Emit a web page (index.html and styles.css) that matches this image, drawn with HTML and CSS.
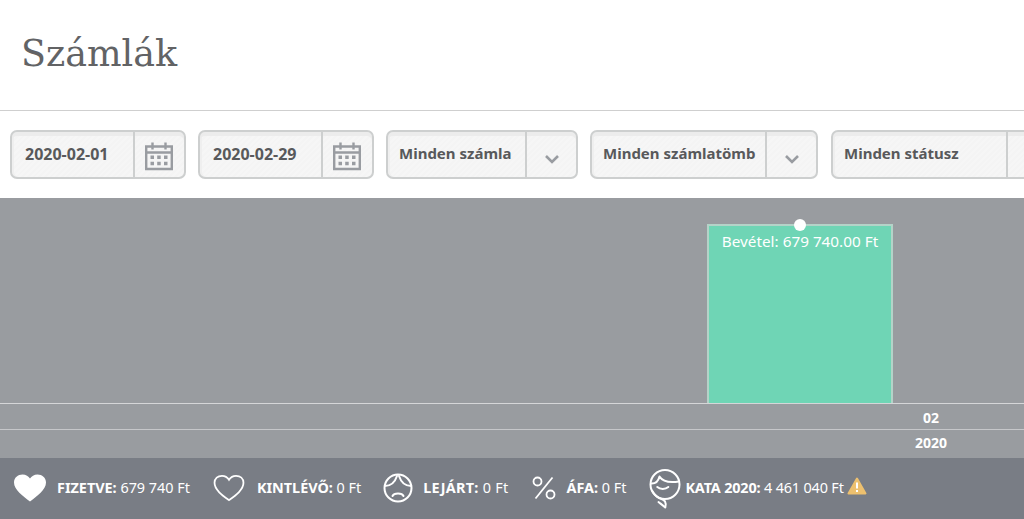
FILE: index.html
```html
<!DOCTYPE html>
<html lang="hu">
<head>
<meta charset="utf-8">
<title>Számlák</title>
<link rel="stylesheet" href="styles.css">
</head>
<body>
<header class="page-header"><h1 class="title">Számlák</h1></header>
<div class="toolbar">
  <div class="field date"><span class="value">2020-02-01</span><span class="addon"><svg class="cal" viewBox="0 0 30 30"><use href="#cal"/></svg></span></div>
  <div class="field date"><span class="value">2020-02-29</span><span class="addon"><svg class="cal" viewBox="0 0 30 30"><use href="#cal"/></svg></span></div>
  <div class="field sel-a"><span class="value">Minden számla</span><span class="addon"><svg class="chev" viewBox="0 0 16 10"><use href="#chev"/></svg></span></div>
  <div class="field sel-b"><span class="value">Minden számlatömb</span><span class="addon"><svg class="chev" viewBox="0 0 16 10"><use href="#chev"/></svg></span></div>
  <div class="field sel-c"><span class="value">Minden státusz</span><span class="addon"><svg class="chev" viewBox="0 0 16 10"><use href="#chev"/></svg></span></div>
</div>
<svg class="defs" aria-hidden="true">
  <symbol id="cal" viewBox="0 0 30 30">
    <path d="M2.200 5.500H27.800V28H2.200Z M2 11.500H28 M8.500 1.500V8.500 M21.500 1.500V8.500" fill="none" stroke="#999ca1" stroke-width="2.400"/>
    <path d="M6.500 14.500h3.500v3.500H6.500zM13.200 14.500h3.500v3.500h-3.500zM20 14.500h3.500v3.500H20zM6.500 20.800h3.500v3.500H6.500zM13.200 20.800h3.500v3.500h-3.500zM20 20.800h3.500v3.500H20z" fill="#999ca1"/>
  </symbol>
  <symbol id="chev" viewBox="0 0 16 10">
    <path d="M2 2L8 8L14 2" fill="none" stroke="#999ca1" stroke-width="2.600"/>
  </symbol>
</svg>
<section class="chart">
  <div class="plot">
    <div class="bar"><span class="dot"></span><span class="bar-label">Bevétel: 679 740.00 Ft</span></div>
  </div>
  <div class="axis axis-month"><span class="tick">02</span></div>
  <div class="axis axis-year"><span class="tick">2020</span></div>
</section>
<footer class="summary">
  <div class="stat s1">
    <svg class="ico" viewBox="0 0 34 30"><path d="M17 28.500C10 23 1 17 1 9.500C1 4.500 5 1.500 9.500 1.500C13 1.500 15.500 3.500 17 5.500C18.500 3.500 21 1.500 24.500 1.500C29 1.500 33 4.500 33 9.500C33 17 24 23 17 28.500Z" fill="#fff"/></svg>
    <span><b>FIZETVE:</b> 679 740 Ft</span>
  </div>
  <div class="stat s2">
    <svg class="ico heart-o" viewBox="0 0 34 30"><path d="M17 28C10 23 1.500 17 1.500 9.500C1.500 4.500 5 2 9.500 2C13 2 15.500 3.800 17 6.200C18.500 3.800 21 2 24.500 2C29 2 32.500 4.500 32.500 9.500C32.500 17 24 23 17 28Z" fill="none" stroke="#fff" stroke-width="1.900"/></svg>
    <span><b>KINTLÉVŐ:</b> 0 Ft</span>
  </div>
  <div class="stat s3">
    <svg class="ico round" viewBox="0 0 30 30"><g fill="none" stroke="#fff" stroke-width="2" stroke-linecap="round"><circle cx="15" cy="15" r="13.500"/><path d="M1.800 13C7 13 11.500 10.500 14 3M16 3C18.500 10.500 23 13 28.200 13"/><path d="M9.500 23C11 19.500 19 19.500 20.500 23"/></g></svg>
    <span><b>LEJÁRT:</b> 0 Ft</span>
  </div>
  <div class="stat s4">
    <svg class="ico pct" viewBox="0 0 24 24"><g fill="none" stroke="#fff" stroke-width="1.800"><circle cx="5.500" cy="5.500" r="4"/><circle cx="18.500" cy="18.500" r="4"/><path d="M20.500 1.500L3.500 22.500"/></g></svg>
    <span><b>ÁFA:</b> 0 Ft</span>
  </div>
  <div class="stat s5">
    <svg class="ico face" viewBox="0 0 32 40"><g fill="none" stroke="#fff" stroke-width="2" stroke-linecap="round" stroke-linejoin="round"><circle cx="16" cy="15.500" r="14.500"/><path d="M2 14.500C6.500 14.800 9.500 11.500 10.500 7.500C13 11.500 18 14.500 30 12.500"/><path d="M8.300 18C11 20.500 16.500 20.500 19.300 18"/><path d="M3 21.500C5.500 26 9 29 12.500 30C16 31 17.800 33 16.300 38.500C14 36.500 12 35 9.500 33"/></g></svg>
    <span class="kata"><b>KATA 2020:</b> 4 461 040 Ft</span>
    <svg class="warn" viewBox="0 0 20 18"><path d="M10 1.500L18.500 16.500H1.500Z" fill="#edc06f" stroke="#edc06f" stroke-width="2" stroke-linejoin="round"/><path d="M10 5.500V11.500M10 13V15" stroke="#fff" stroke-width="2"/></svg>
  </div>
</footer>
</body>
</html>
```
FILE: styles.css
```css
* { box-sizing: border-box; }
html, body { margin: 0; padding: 0; }
body {
  width: 1024px;
  height: 519px;
  overflow: hidden;
  background: #fff;
  font-family: "Noto Sans", "Open Sans", sans-serif;
  color: #58595b;
}
.defs { position: absolute; width: 0; height: 0; }
.page-header {
  height: 111px;
  border-bottom: 1px solid #cfcfcf;
  padding: 32px 0 0 21px;
}
.title {
  margin: 0;
  font-family: "DejaVu Serif", serif;
  font-weight: 400;
  font-size: 36.500px;
  line-height: 44px;
  letter-spacing: 0;
  color: #626365;
}
.toolbar {
  height: 87px;
  display: flex;
  gap: 12px;
  padding: 19px 0 0 10px;
  overflow: hidden;
}
.field {
  flex: none;
  height: 49px;
  display: flex;
  border: 2px solid #cdcfcf;
  border-radius: 7px;
  background: repeating-linear-gradient(135deg, #f6f6f6 0 2px, #f4f4f4 2px 4px);
  box-shadow: inset 0 4px 0 #ececec, inset 2px 0 0 #efefef;
}
.date { width: 176px; }
.sel-a { width: 192px; }
.sel-b { width: 228px; }
.sel-c { width: 228px; margin-left: 1px; }
.value {
  flex: 1;
  font-size: 15px;
  font-weight: 700;
  line-height: 42px;
  padding-left: 11px;
  white-space: nowrap;
  color: #58595b;
}
.date .value {
  font-size: 16px;
  line-height: 45px;
  padding-left: 13px;
}
.addon {
  flex: none;
  width: 51px;
  display: flex;
  align-items: center;
  justify-content: center;
  border-left: 2px solid #cdcfcf;
}
.date .addon { padding: 2px 2px 0 0; }
.sel-a .addon, .sel-b .addon, .sel-c .addon { padding-top: 8px; }
.cal { width: 30px; height: 30px; }
.chev { width: 16px; height: 10px; }
.chart {
  height: 260px;
  background: #999ca0;
  color: #fff;
  display: flex;
  flex-direction: column;
}
.plot {
  position: relative;
  height: 206px;
  flex: none;
  border-bottom: 1px solid #d5d6d8;
}
.bar {
  position: absolute;
  left: 707px;
  top: 26px;
  width: 186px;
  height: 179px;
  background: #6fd5b5;
  border: 2px solid #b4d3c8;
  border-bottom: 0;
  text-align: center;
  font-size: 15.300px;
  line-height: 20px;
  padding-top: 5px;
  white-space: nowrap;
  color: #fff;
}
.dot {
  position: absolute;
  left: 85px;
  top: -7px;
  width: 12px;
  height: 12px;
  border-radius: 50%;
  background: #fff;
}
.axis {
  position: relative;
  font-size: 14px;
  font-weight: 700;
}
.axis-month { height: 26px; border-bottom: 1px solid #c6c7ca; }
.axis-year { height: 28px; }
.tick {
  position: absolute;
  left: 891px;
  width: 80px;
  text-align: center;
  top: 5px;
  line-height: 18px;
}
.axis-year .tick { top: 4px; }
.summary {
  height: 61px;
  background: #797d85;
  display: flex;
  align-items: center;
  padding: 0 0 2px 13px;
  color: #fff;
  font-size: 14.400px;
  white-space: nowrap;
}
.summary b { font-weight: 700; }
.stat { display: flex; align-items: center; gap: 10px; flex: none; }
.s2 { margin-left: 23px; gap: 12px; }
.s3 { margin-left: 22px; gap: 10px; letter-spacing: .28px; }
.s4 { margin-left: 24px; gap: 10px; }
.s5 { margin-left: 23px; gap: 4px; }
.kata { letter-spacing: -.15px; }
.ico { width: 34px; height: 30px; flex: none; }
.ico.heart-o { width: 32px; height: 28px; }
.ico.round { width: 30px; height: 30px; }
.ico.pct { width: 24px; height: 24px; }
.ico.face { width: 32px; height: 40px; margin-top: 3px; }
.warn { width: 20px; height: 18px; flex: none; margin-left: -1px; margin-bottom: 4px; }
```
